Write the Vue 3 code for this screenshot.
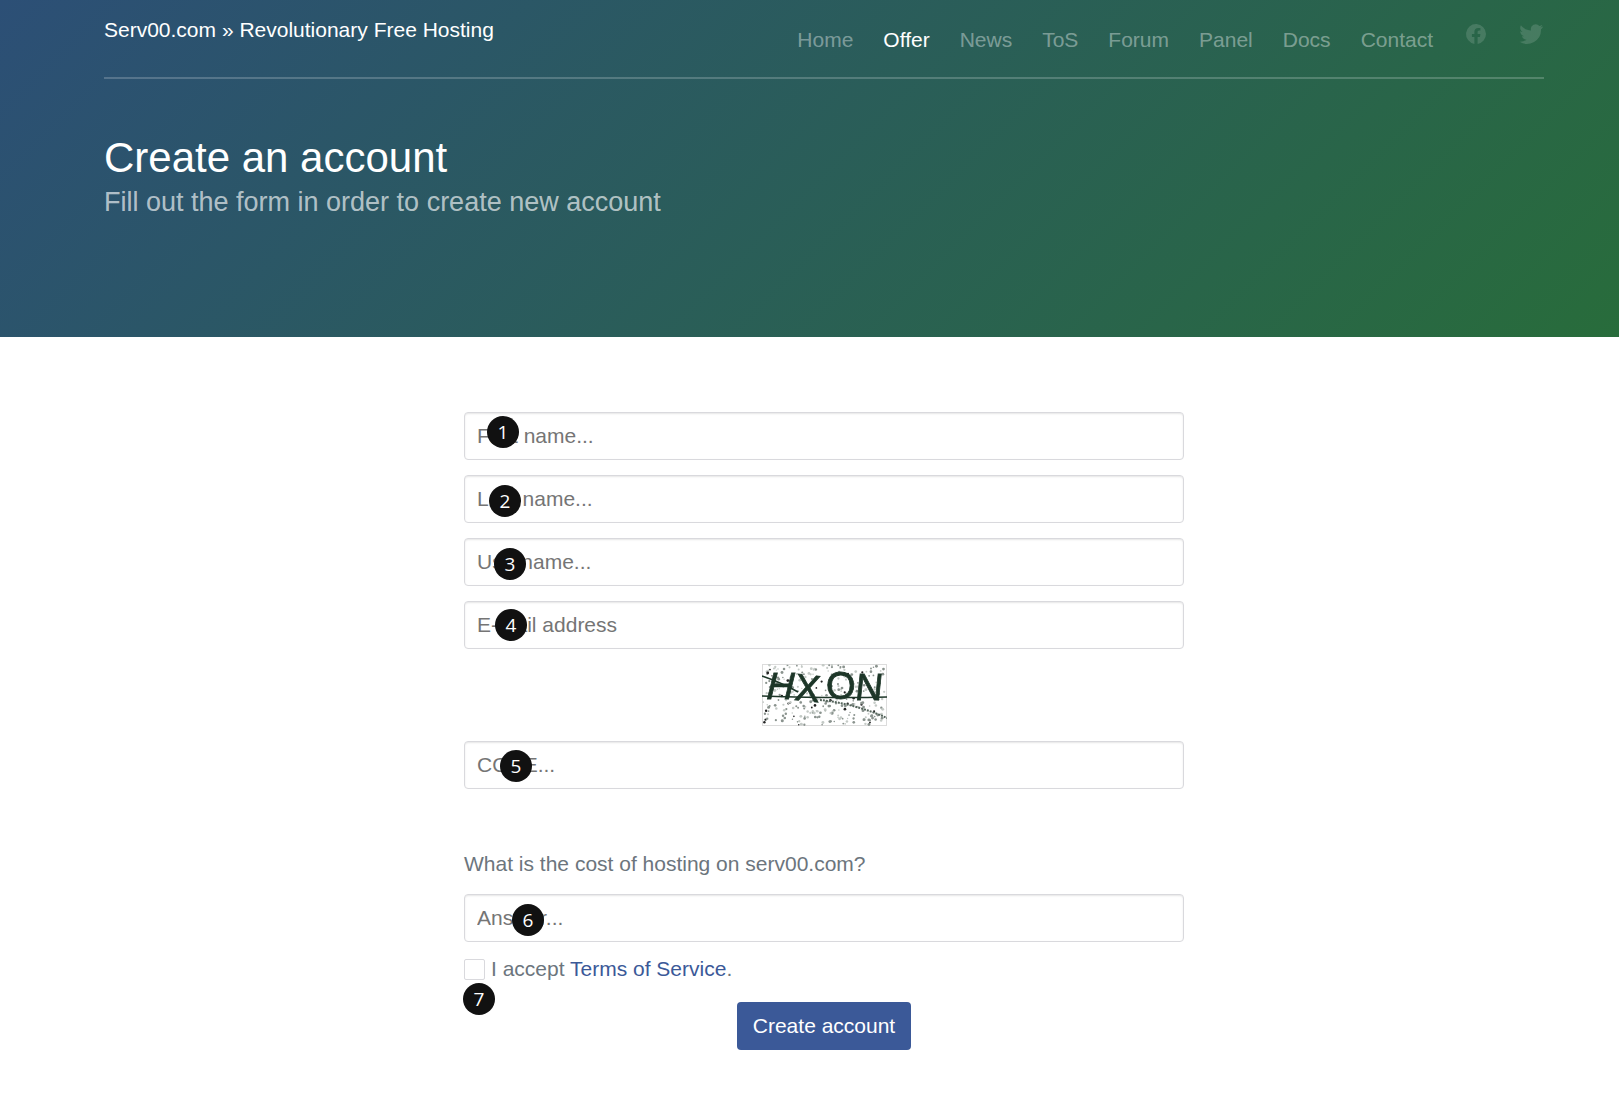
<template>
  <div class="page">
    <header class="hero">
      <div class="container">
        <div class="topbar">
          <a class="brand" href="#">Serv00.com » Revolutionary Free Hosting</a>
          <nav class="nav">
            <a v-for="item in navItems" :key="item" href="#" :class="{ active: item === 'Offer' }">{{ item }}</a>
            <a href="#" class="social fb" aria-label="Facebook">
              <svg width="24" height="24" viewBox="0 0 24 24">
                <path d="M22 12a10 10 0 1 0-11.600 9.900v-7H7.900V12h2.500V9.800c0-2.500 1.500-3.900 3.800-3.900 1.100 0 2.200.2 2.200.2v2.500h-1.200c-1.200 0-1.600.8-1.600 1.600V12h2.800l-.4 2.900h-2.400v7A10 10 0 0 0 22 12z" />
              </svg>
            </a>
            <a href="#" class="social tw" aria-label="Twitter">
              <svg width="27" height="24" viewBox="0 0 24 24">
                <path d="M23.600 4.600c-.9.4-1.800.6-2.800.8 1-.6 1.800-1.500 2.200-2.700-.9.6-2 1-3.100 1.200A4.900 4.900 0 0 0 11.500 8.400C7.400 8.200 3.800 6.300 1.400 3.300c-1.300 2.200-.7 5.100 1.500 6.600-.8 0-1.600-.2-2.200-.6 0 2.400 1.700 4.400 3.900 4.900-.7.2-1.500.2-2.200.1.600 2 2.400 3.400 4.600 3.400A9.900 9.900 0 0 1 0 19.700a14 14 0 0 0 21.500-12.400c1-.7 1.800-1.600 2.100-2.700z" />
              </svg>
            </a>
          </nav>
        </div>
        <h1>Create an account</h1>
        <p class="lead">Fill out the form in order to create new account</p>
      </div>
    </header>

    <main class="container content">
      <form class="signup" @submit.prevent>
        <input class="field" type="text" placeholder="First name..." />
        <input class="field" type="text" placeholder="Last name..." />
        <input class="field" type="text" placeholder="Username..." />
        <input class="field" type="email" placeholder="E-mail address" />

        <div class="captcha">
          <svg width="125" height="62" viewBox="0 0 125 62">
            <rect x="0.5" y="0.5" width="124" height="61" fill="#fff" stroke="#dcdcdc" />
            <g class="speckle">
              <circle v-for="(dot, i) in noise" :key="i" :cx="dot.x" :cy="dot.y" :r="dot.r" :fill="dot.fill" />
              <g class="captcha-text">
                <text x="3" y="35" transform="skewX(-14) translate(8 0)">H</text>
                <text x="33" y="37" transform="rotate(6 45 25)">X</text>
                <text x="64" y="35">O</text>
                <text x="92" y="36" transform="skewX(-6) translate(4 0)">N</text>
              </g>
              <path d="M0 12C12 16 22 20 36 28M0 32C30 33 90 34 125 33" fill="none" stroke="#1d3628" stroke-width="1.6" />
              <path d="M58 36C80 38 105 45 125 54" fill="none" stroke="#55655c" stroke-width="2" stroke-dasharray="2 1" />
            </g>
          </svg>
        </div>

        <input class="field" type="text" placeholder="CODE..." />

        <p class="question">What is the cost of hosting on serv00.com?</p>
        <input class="field" type="text" placeholder="Answer..." />

        <label class="terms">
          <input type="checkbox" />
          <span>I accept <a href="#">Terms of Service</a>.</span>
        </label>

        <button class="submit" type="submit">Create account</button>
      </form>
    </main>

    <!-- numbered callouts drawn over the screenshot -->
    <span
      v-for="(mark, i) in marks"
      :key="i"
      class="mark"
      :style="{ left: mark.x + 'px', top: mark.y + 'px' }"
    >{{ i + 1 }}</span>
  </div>
</template>

<script setup>
const navItems = ['Home', 'Offer', 'News', 'ToS', 'Forum', 'Panel', 'Docs', 'Contact']

const marks = [
  { x: 503, y: 432 },
  { x: 505, y: 501 },
  { x: 510, y: 564 },
  { x: 511, y: 625 },
  { x: 516, y: 766 },
  { x: 528, y: 920 },
  { x: 479, y: 999 },
]

// fixed seed so the captcha speckle is the same on each load
let seed = 7
const rand = () => {
  seed = (seed * 16807) % 2147483647
  return seed / 2147483647
}

const noise = Array.from({ length: 300 }, () => {
  const shade = rand()
  return {
    x: 1 + rand() * 123,
    y: 1 + rand() * 60,
    r: 0.7 + rand() * 0.8,
    fill: shade > 0.92 ? '#222' : shade > 0.5 ? '#8a938e' : '#c4cac6',
  }
})
</script>

<style>
body {
  background: #fff;
}
</style>

<style scoped>
.page {
  position: relative;
  font-family: "Liberation Sans", Arial, sans-serif;
  font-size: 21px;
  color: #6c757d;
}

.container {
  width: 1440px;
  margin-left: 104px;
}

.hero {
  height: 337px;
  background: linear-gradient(135deg, #2c4f76, #286c3b);
}

.topbar {
  display: flex;
  justify-content: space-between;
  align-items: flex-start;
  height: 77px;
  border-bottom: 2px solid rgba(255, 255, 255, 0.2);
}

.brand {
  margin-top: 17px;
  line-height: 26px;
  color: #fff;
  text-decoration: none;
}

.nav {
  display: flex;
  align-items: flex-start;
  gap: 30px;
  margin-top: 27px;
  margin-right: -1px;
  line-height: 26px;
}

.nav a {
  color: rgba(255, 255, 255, 0.4);
  text-decoration: none;
}

.nav a.active {
  color: #fff;
}

.social {
  margin-top: -5px;
}

.fb {
  margin-left: 1px;
}

.social svg {
  display: block;
  fill: rgba(255, 255, 255, 0.14);
}

h1 {
  margin: 52px 0 0;
  font-size: 42px;
  font-weight: 400;
  line-height: 54px;
  color: #fff;
}

.lead {
  margin: 0;
  font-size: 27px;
  line-height: 34px;
  color: rgba(255, 255, 255, 0.65);
}

.content {
  padding-top: 75px;
  padding-bottom: 50px;
}

.signup {
  display: flex;
  flex-direction: column;
  width: 720px;
  margin: 0 auto;
}

.field {
  box-sizing: border-box;
  width: 100%;
  height: 48px;
  margin-bottom: 15px;
  padding: 0 12px;
  border: 1px solid #d9d9dd;
  border-radius: 4px;
  box-shadow: inset 0 1px 2px rgba(0, 0, 0, 0.1);
  font-family: inherit;
  font-size: 21px;
  color: #495057;
  background: #fff;
}

.field::placeholder {
  color: #757575;
  opacity: 1;
}

.captcha {
  display: flex;
  justify-content: center;
  margin-bottom: 15px;
}

.captcha svg {
  display: block;
}

.speckle {
  filter: blur(0.6px);
}

.captcha-text {
  font-family: "Liberation Sans", Arial, sans-serif;
  font-size: 38px;
  fill: #1d3628;
  stroke: #1d3628;
  stroke-width: 0.8px;
}

.question {
  margin: 47px 0 17px;
  line-height: 26px;
}

.terms {
  display: flex;
  align-items: center;
  gap: 6px;
  height: 22px;
  margin-top: 1px;
  line-height: 26px;
}

.terms input {
  appearance: none;
  box-sizing: border-box;
  width: 21px;
  height: 21px;
  margin: 0;
  border: 1px solid #d9d9dd;
  border-radius: 2px;
  background: #fff;
}

.terms a {
  color: #3b5998;
  text-decoration: none;
}

.submit {
  align-self: center;
  height: 48px;
  margin-top: 22px;
  padding: 0 16px;
  border: 0;
  border-radius: 4px;
  font-family: inherit;
  font-size: 21px;
  color: #fff;
  background: #3b5998;
}

.mark {
  position: absolute;
  width: 32px;
  height: 32px;
  margin: -16px 0 0 -16px;
  border-radius: 50%;
  font-family: "Open Sans", sans-serif;
  font-size: 19px;
  line-height: 32px;
  text-align: center;
  color: #fff;
  background: #111;
}
</style>
